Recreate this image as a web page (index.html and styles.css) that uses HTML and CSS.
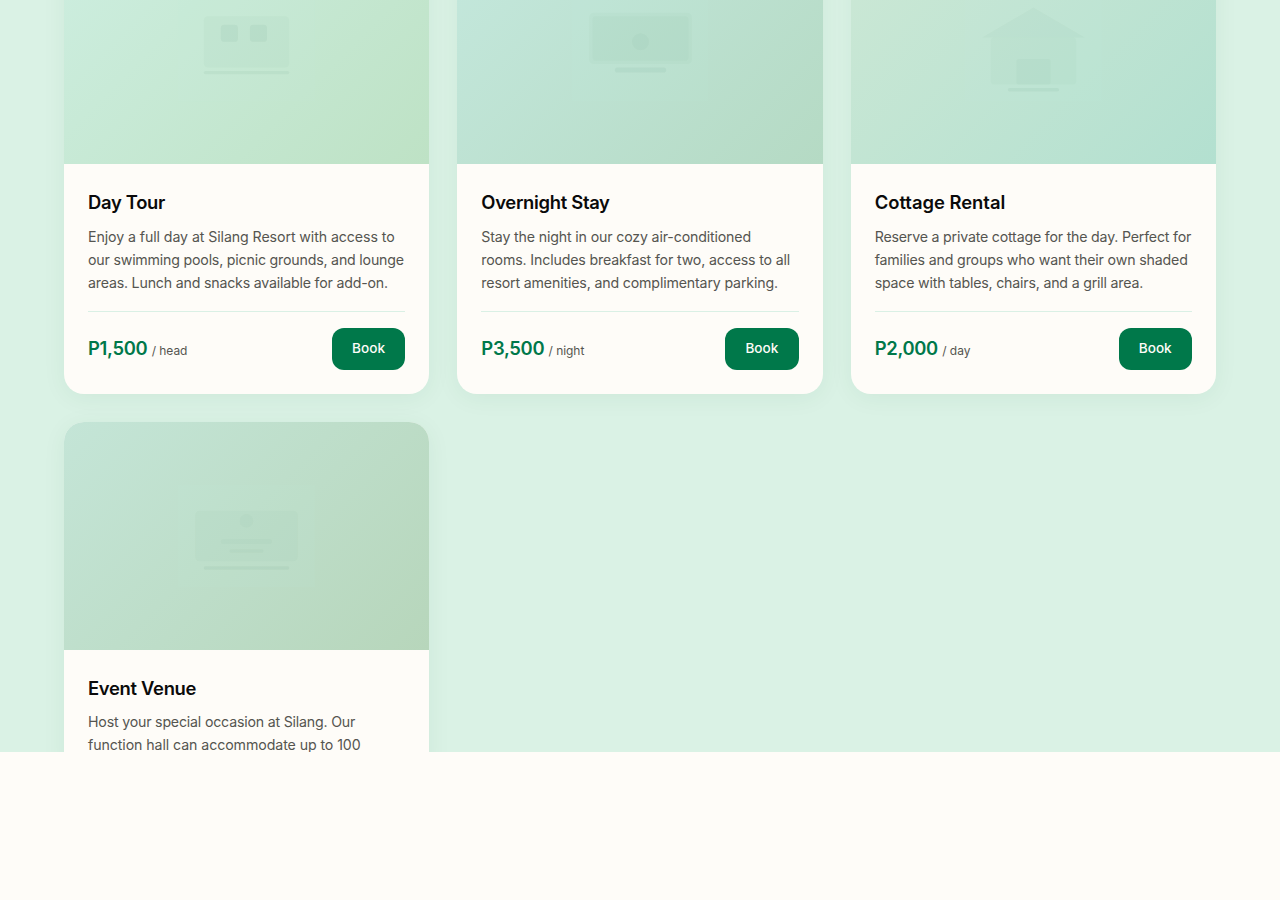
FILE: index.html
```html
<!DOCTYPE html>
<html lang="en">
<head>
<meta charset="utf-8">
<title>Silang Resort</title>
<link rel="stylesheet" href="styles.css">
</head>
<body>
<section class="services">
  <div class="grid">
    <article class="card">
      <div class="media media-tour">
        <svg viewBox="0 0 160 120"><rect class="plate" width="160" height="120"/><rect class="t1" x="30" y="20" width="100" height="60" rx="5"/><rect class="t2" x="50" y="30" width="20" height="20" rx="4"/><rect class="t2" x="84" y="30" width="20" height="20" rx="4"/><rect class="t2" x="30" y="84" width="100" height="4" rx="2"/></svg>
      </div>
      <div class="body">
        <h3>Day Tour</h3>
        <p><span class="wide">Enjoy a full day at Silang Resort with access to</span><br><span class="tight">our swimming pools, picnic grounds, and lounge</span><br><span class="tight">areas. Lunch and snacks available for add-on.</span></p>
        <div class="foot"><div class="price">P1,500 <small>/ head</small></div><button class="book">Book</button></div>
      </div>
    </article>
    <article class="card">
      <div class="media media-stay">
        <svg viewBox="0 0 160 120"><rect class="plate" width="160" height="120"/><rect class="t0" x="20" y="16" width="120" height="60" rx="5"/><rect class="t0" x="24" y="20" width="112" height="52" rx="3"/><circle class="t1" cx="80" cy="50" r="10"/><rect class="t2" x="50" y="80" width="60" height="6" rx="3"/></svg>
      </div>
      <div class="body">
        <h3>Overnight Stay</h3>
        <p>Stay the night in our cozy air-conditioned<br>rooms. Includes breakfast for two, access to all<br>resort amenities, and complimentary parking.</p>
        <div class="foot"><div class="price">P3,500 <small>/ night</small></div><button class="book">Book</button></div>
      </div>
    </article>
    <article class="card">
      <div class="media media-cottage">
        <svg viewBox="0 0 160 120"><rect class="plate" width="160" height="120"/><path class="t1" d="M20 45 80 10l60 35z"/><rect class="t0" x="30" y="45" width="100" height="55" rx="4"/><rect class="t1" x="60" y="70" width="40" height="30" rx="3"/><rect class="t2" x="50" y="104" width="60" height="4" rx="2"/></svg>
      </div>
      <div class="body">
        <h3 class="open">Cottage Rental</h3>
        <p><span class="tight">Reserve a private cottage for the day. Perfect for</span><br>families and groups who want their own shaded<br><span class="tight">space with tables, chairs, and a grill area.</span></p>
        <div class="foot"><div class="price">P2,000 <small>/ day</small></div><button class="book">Book</button></div>
      </div>
    </article>
    <article class="card">
      <div class="media media-event">
        <svg viewBox="0 0 160 120"><rect class="plate" width="160" height="120"/><rect class="t0" x="20" y="30" width="120" height="59" rx="5"/><circle class="t0" cx="80" cy="42" r="8"/><rect class="t0" x="50" y="63" width="60" height="6" rx="3"/><rect class="t1" x="60" y="75" width="40" height="4" rx="2"/><rect class="t2" x="30" y="95" width="100" height="4" rx="2"/></svg>
      </div>
      <div class="body">
        <h3>Event Venue</h3>
        <p class="raised"><span class="tight">Host your special occasion at Silang. Our</span><br><span class="wide">function hall can accommodate up to 100</span></p>
      </div>
    </article>
  </div>
</section>
</body>
</html>
```

FILE: styles.css
```css
* { box-sizing: border-box; }
body {
  margin: 0;
  background: #fefcf8;
  color: #0a0a0a;
  font-family: Inter, "Liberation Sans", sans-serif;
}
.services {
  height: 752px;
  overflow: hidden;
  background: #daf2e5;
  padding: 0 64px;
}
.grid {
  display: grid;
  grid-template-columns: repeat(3, 1fr);
  gap: 28px;
  margin-top: -64px;
}
.card {
  background: #fefcf8;
  border-radius: 20px;
  overflow: hidden;
  box-shadow: 0 4px 24px rgba(0, 80, 50, .06);
}
.media {
  aspect-ratio: 16 / 10;
  display: flex;
  align-items: center;
  justify-content: center;
}
.media svg { height: 45%; aspect-ratio: 4 / 3; }
.media-tour { background: linear-gradient(135deg, #cdeee0, #bee2c5); }
.media-stay { background: linear-gradient(135deg, #c4e8dd, #b5dac4); }
.media-cottage { background: linear-gradient(135deg, #cce8d5, #b3e0d0); }
.media-event { background: linear-gradient(135deg, #c4e5d7, #b7d6bb); }
.plate { fill: rgba(200, 235, 225, .07); }
.t0 { fill: rgba(0, 80, 40, .018); }
.t1 { fill: rgba(0, 80, 40, .025); }
.t2 { fill: rgba(0, 80, 40, .045); }
.body { padding: 24px; }
h3 {
  margin: 0 0 7px;
  font-size: 18.4px;
  line-height: 29.44px;
  font-weight: 600;
  letter-spacing: -.3px;
}
h3.open { letter-spacing: 0; }
p {
  margin: 0;
  font-size: 14.2px;
  line-height: 23.04px;
  color: #555550;
  letter-spacing: -.16px;
  white-space: nowrap;
}
p.raised { margin-top: -8px; padding-top: 0.5px; position: static; }
.raised { transform: none; }
h3 + p.raised { margin-top: -1px; }
.tight { letter-spacing: -.2px; }
.wide { letter-spacing: -.09px; }
.foot {
  display: flex;
  align-items: center;
  justify-content: space-between;
  margin-top: 17px;
  padding-top: 16px;
  border-top: 1px solid #daf0e5;
}
.price {
  font-size: 18.4px;
  font-weight: 600;
  letter-spacing: -.3px;
  color: #00784a;
  padding-bottom: 1px;
}
.price small {
  font-size: 12px;
  font-weight: 400;
  letter-spacing: -.05px;
  color: #555550;
}
.book {
  width: 73.5px;
  height: 42px;
  padding: 0 0 2px;
  border: 0;
  border-radius: 12px;
  background: #00784a;
  color: #fefcf8;
  font: 500 13.6px Inter, "Liberation Sans", sans-serif;
}
```
